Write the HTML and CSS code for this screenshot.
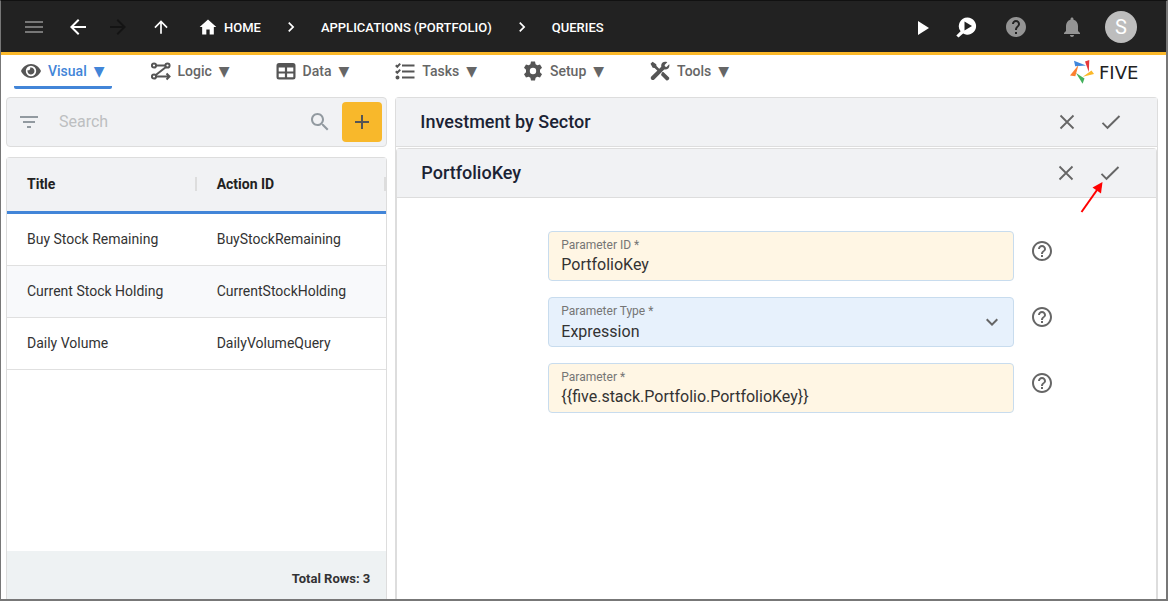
FILE: index.html
```
<!DOCTYPE html>
<html lang="en">
<head>
<meta charset="utf-8">
<meta name="viewport" content="width=device-width, initial-scale=1">
<title>Five - Queries</title>
<link rel="stylesheet" href="styles.css">
</head>
<body class="app">
<svg class="sprite" aria-hidden="true">
  <symbol id="chevron" viewBox="0 0 24 24"><path d="M10 6 8.59 7.41 13.17 12l-4.58 4.59L10 18l6-6z"/></symbol>
  <symbol id="help-outline" viewBox="0 0 24 24"><path d="M11 18h2v-2h-2v2zm1-16C6.48 2 2 6.48 2 12s4.480 10 10 10 10-4.480 10-10S17.520 2 12 2zm0 18c-4.410 0-8-3.590-8-8s3.590-8 8-8 8 3.590 8 8-3.590 8-8 8zm0-14c-2.210 0-4 1.790-4 4h2c0-1.100.9-2 2-2s2 .9 2 2c0 2-3 1.750-3 5h2c0-2.250 3-2.500 3-5 0-2.210-1.790-4-4-4z"/></symbol>
  <symbol id="close" viewBox="0 0 24 24"><path d="M5.500 5.500l13 13M18.500 5.500l-13 13" fill="none" stroke="currentColor" stroke-width="1.800"/></symbol>
  <symbol id="check" viewBox="0 0 24 24"><path d="M3.500 12.800l5 5L20.500 6" fill="none" stroke="currentColor" stroke-width="1.900"/></symbol>
</svg>

<header class="topbar">
  <div class="topbar-nav">
    <button class="icon-btn dim menu-btn" aria-label="Menu"><svg class="icon" viewBox="0 0 24 24"><path d="M3 6h18v2H3zM3 11h18v2H3zM3 16h18v2H3z"/></svg></button>
    <button class="icon-btn" aria-label="Back"><svg class="icon" viewBox="0 0 24 24"><path d="M20 11H7.830l5.590-5.590L12 4l-8 8 8 8 1.410-1.410L7.830 13H20z"/></svg></button>
    <button class="icon-btn off" aria-label="Forward" disabled><svg class="icon" viewBox="0 0 24 24"><path d="M4 11h12.170l-5.590-5.590L12 4l8 8-8 8-1.410-1.410L16.170 13H4z"/></svg></button>
    <button class="icon-btn up-btn" aria-label="Up"><svg class="icon small" viewBox="0 0 24 24"><path d="M4 12l1.410 1.410L11 7.830V20h2V7.830l5.580 5.590L20 12l-8-8z"/></svg></button>
  </div>
  <nav class="crumbs" aria-label="Breadcrumb">
    <a class="crumb" href="#"><svg class="icon small" viewBox="0 0 24 24"><path d="M10 21v-6h4v6h5v-9h3L12 3 2 12h3v9z"/></svg><span class="crumb-text">HOME</span></a>
    <svg class="icon small"><use href="#chevron"/></svg>
    <a class="crumb" href="#"><span class="crumb-text">APPLICATIONS (PORTFOLIO)</span></a>
    <svg class="icon small"><use href="#chevron"/></svg>
    <a class="crumb" href="#"><span class="crumb-text">QUERIES</span></a>
  </nav>
  <div class="topbar-tools">
    <button class="icon-btn" aria-label="Run"><svg class="icon" viewBox="0 0 24 24"><path d="M8 6v14l11-7z"/></svg></button>
    <button class="icon-btn" aria-label="Inspect"><svg class="icon" viewBox="0 0 24 24"><path fill-rule="evenodd" d="M13.500 2.500a8.600 8.600 0 1 1-4.400 16L4.500 22.500 2.300 20.600l4.300-4.300A8.600 8.600 0 0 1 13.500 2.500zM10.500 6.600v9l7.500-4.500z"/></svg></button>
    <button class="icon-btn grey help-btn" aria-label="Help"><svg class="icon" viewBox="0 0 24 24"><path d="M12 2C6.480 2 2 6.480 2 12s4.480 10 10 10 10-4.480 10-10S17.520 2 12 2zm1 17h-2v-2h2v2zm2.070-7.750l-.9.920C13.450 12.900 13 13.500 13 15h-2v-.5c0-1.100.45-2.100 1.170-2.830l1.240-1.260c.37-.36.590-.86.590-1.410 0-1.100-.9-2-2-2s-2 .9-2 2H8c0-2.210 1.790-4 4-4s4 1.790 4 4c0 .88-.36 1.680-.93 2.250z"/></svg></button>
    <button class="icon-btn grey bell-btn" aria-label="Notifications"><svg class="icon" viewBox="0 0 24 24"><path d="M12 22c1.100 0 2-.9 2-2h-4c0 1.100.89 2 2 2zm6-6v-5c0-3.070-1.640-5.640-4.500-6.320V4c0-.83-.67-1.500-1.500-1.500s-1.500.67-1.500 1.500v.68C7.630 5.360 6 7.920 6 11v5l-2 2v1h16v-1l-2-2z"/></svg></button>
    <button class="avatar" aria-label="Account">S</button>
  </div>
</header>

<div class="menubar">
  <nav class="tabs" aria-label="Main">
    <button class="tab active"><svg class="tab-icon" viewBox="0 0 20 20"><path fill-rule="evenodd" d="M10 3C5.500 3 1.800 6 0 10c1.800 4 5.500 7 10 7s8.200-3 10-7c-1.800-4-5.500-7-10-7zm0 1.800a5.200 5.200 0 1 1 0 10.400A5.200 5.200 0 0 1 10 4.800z"/><path d="M10 6.500a3.500 3.500 0 1 1-3.400 2.600 1.900 1.900 0 0 0 2.500-2.500z"/></svg><span>Visual</span><span class="tab-caret">▼</span></button>
    <button class="tab"><svg class="tab-icon line" viewBox="0 0 20 20"><circle cx="3" cy="4.500" r="2.100"/><circle cx="16.500" cy="4.500" r="2.100"/><circle cx="3" cy="15.500" r="2.100"/><path d="M5.200 4.500h9.100M15 6 4.800 14M5.200 15.500H18M15.500 12.500l3 3-3 3"/></svg><span>Logic</span><span class="tab-caret">▼</span></button>
    <button class="tab"><svg class="tab-icon" viewBox="0 0 20 20"><path fill-rule="evenodd" d="M3 2h14a2.500 2.500 0 0 1 2.500 2.500v11.500a2.500 2.500 0 0 1-2.500 2.500H3A2.500 2.500 0 0 1 .5 16V4.500A2.500 2.500 0 0 1 3 2zm-.3 4.500v4h6.200v-4zm8.400 0v4h6.200v-4zm-8.400 6v3.700h6.200v-3.700zm8.400 0v3.700h6.200v-3.700z"/></svg><span>Data</span><span class="tab-caret">▼</span></button>
    <button class="tab"><svg class="tab-icon line" viewBox="0 0 20 20"><path d="M7 4.500h12.500M7 10.500h12.500M7 16.500h12.500M.8 4.200l1.500 1.500L5.200 2.600M.8 10.200l1.500 1.500 2.900-3.100"/><circle cx="2.500" cy="16.500" r="1"/></svg><span>Tasks</span><span class="tab-caret">▼</span></button>
    <button class="tab"><svg class="tab-icon" viewBox="0 0 20 20"><path fill-rule="evenodd" d="M8 .5h4l.6 2.800 1.700 1L17 3.400l2 3.400-2 2v2.400l2 2-2 3.400-2.700-.9-1.700 1-.6 2.800H8l-.6-2.800-1.700-1-2.700.9-2-3.400 2-2V8.800l-2-2 2-3.400 2.700.9 1.700-1zm2 6.300a3.200 3.200 0 1 0 0 6.400 3.200 3.200 0 0 0 0-6.400z"/></svg><span>Setup</span><span class="tab-caret">▼</span></button>
    <button class="tab"><svg class="tab-icon" viewBox="0 0 20 20"><path d="M.5 2.800 2.600.8l3.600 2.400.3 1.900 3.600 3.600-1.900 1.900-3.600-3.600-1.900-.3zM12 11.200l1.400-.2 5.700 5.400c.8 1.700-1.300 3.700-2.900 2.800L11 14z"/><path d="M17.300 1.300 14.600 4l.4 1.500 1.500.4 2.700-2.700c1 3.500-1.800 6-5 5.300l-9.900 10c-2 1.800-4.800-.9-3-3l10-9.800c-.8-3.300 2.300-6 6-4.400z"/></svg><span>Tools</span><span class="tab-caret">▼</span></button>
  </nav>
  <div class="brand">
    <svg class="brand-mark" viewBox="0 0 24 24"><path fill="#3f86dc" d="M4 .8 16 5.500 5.200 6.200z"/><path fill="#e5383b" d="M15 1.500 19.300 0 18.800 12z"/><path fill="#fbb829" d="M12.800 16.800 21.500 10.500 24 14z"/><path fill="#43b05c" d="M6 13 14.500 18.500 12.600 23.800z"/><path fill="#fb8030" d="M8.500 5 5.300 16.200 0 15.500z"/></svg>
    <span class="brand-name">FIVE</span>
  </div>
</div>

<main class="workspace">
  <section class="list-pane">
    <form class="search">
      <button type="button" class="icon-btn filter-btn" aria-label="Filter"><svg class="icon" viewBox="0 0 24 24"><path d="M10 18h4v-2h-4v2zM3 6v2h18V6H3zm3 7h12v-2H6v2z"/></svg></button>
      <input class="search-input" type="text" placeholder="Search" aria-label="Search">
      <svg class="icon search-icon" viewBox="0 0 24 24"><path d="M15.500 14h-.79l-.28-.27C15.410 12.590 16 11.110 16 9.500 16 5.910 13.090 3 9.500 3S3 5.910 3 9.500 5.910 16 9.500 16c1.610 0 3.090-.59 4.230-1.570l.27.28v.79l5 4.990L20.490 19l-4.990-5zm-6 0C7.010 14 5 11.990 5 9.500S7.010 5 9.500 5 14 7.010 14 9.500 11.990 14 9.500 14z"/></svg>
      <button type="button" class="add-btn" aria-label="Add"><svg class="icon" viewBox="0 0 24 24"><path d="M19 13h-6v6h-2v-6H5v-2h6V5h2v6h6z"/></svg></button>
    </form>
    <div class="list-card">
      <table class="grid">
        <thead><tr><th scope="col"><span class="th-inner">Title</span></th><th scope="col"><span class="th-inner">Action ID</span></th></tr></thead>
        <tbody>
          <tr><td>Buy Stock Remaining</td><td>BuyStockRemaining</td></tr>
          <tr><td>Current Stock Holding</td><td>CurrentStockHolding</td></tr>
          <tr><td>Daily Volume</td><td>DailyVolumeQuery</td></tr>
        </tbody>
      </table>
      <div class="list-footer">Total Rows: 3</div>
    </div>
  </section>

  <section class="detail">
    <div class="panel-head">
      <h1 class="panel-title">Investment by Sector</h1>
      <button class="icon-btn" aria-label="Cancel"><svg class="icon"><use href="#close"/></svg></button>
      <button class="icon-btn" aria-label="Save"><svg class="icon"><use href="#check"/></svg></button>
    </div>
    <div class="subpanel">
      <div class="panel-head">
        <h2 class="panel-title">PortfolioKey</h2>
        <button class="icon-btn" aria-label="Cancel parameter"><svg class="icon"><use href="#close"/></svg></button>
        <button class="icon-btn save-param" aria-label="Save parameter"><svg class="icon"><use href="#check"/></svg><svg class="pointer" viewBox="0 0 24 32"><path d="M1.500 31 17 9" stroke="#f00" stroke-width="2"/><path fill="#f00" d="M22.500 1 21 12.500 12.500 6.500z"/></svg></button>
      </div>
      <form class="fields">
        <div class="row">
          <div class="field"><label for="pid">Parameter ID *</label><input id="pid" type="text" value="PortfolioKey"></div>
          <button type="button" class="icon-btn" aria-label="Help on Parameter ID"><svg class="icon"><use href="#help-outline"/></svg></button>
        </div>
        <div class="row">
          <div class="field choice"><label for="ptype">Parameter Type *</label><select id="ptype"><option>Expression</option></select><svg class="icon caret"><use href="#chevron"/></svg></div>
          <button type="button" class="icon-btn" aria-label="Help on Parameter Type"><svg class="icon"><use href="#help-outline"/></svg></button>
        </div>
        <div class="row">
          <div class="field"><label for="pval">Parameter *</label><input id="pval" type="text" value="{{five.stack.Portfolio.PortfolioKey}}"></div>
          <button type="button" class="icon-btn" aria-label="Help on Parameter"><svg class="icon"><use href="#help-outline"/></svg></button>
        </div>
      </form>
    </div>
  </section>
</main>
</body>
</html>
```
FILE: styles.css
```
* { box-sizing: border-box; }

.app {
  margin: 0;
  min-height: 100vh;
  display: flex;
  flex-direction: column;
  border: solid #777;
  border-width: 1px 2px 2px 1px;
  border-top-color: #111;
  background: #fff;
  color: #333;
  font-family: Roboto, "Liberation Sans", sans-serif;
  font-size: 14px;
}

button, input, select { font: inherit; color: inherit; margin: 0; }
button { padding: 0; border: 0; background: none; }

.sprite { display: none; }
.icon { display: block; width: 24px; height: 24px; flex: none; fill: currentColor; }
.icon.small { width: 20px; height: 20px; }
.icon-btn {
  flex: none;
  width: 40px;
  height: 40px;
  display: flex;
  align-items: center;
  justify-content: center;
}

/* Top bar */
.topbar {
  display: flex;
  align-items: center;
  height: 54px;
  padding: 0 29px 0 13px;
  background: #222;
  border-bottom: 3px solid #fbb829;
  color: #fff;
}
.topbar-nav, .topbar-tools, .crumbs, .crumb { display: flex; align-items: center; }
.menu-btn { margin-right: 4px; }
.up-btn { margin-left: 3px; }
.dim { color: #777; }
.off { color: #141414; }
.grey { color: #949494; }
.crumbs { flex: 1; gap: 20px; margin-left: 17px; }
.crumb { gap: 6px; color: #fff; font-size: 13px; font-weight: 500; text-decoration: none; }
.crumb-text { padding-top: 2px; }
.help-btn { margin: 0 16px 0 10px; }
.topbar-tools .icon-btn + .icon-btn:nth-child(2) { margin-left: 4px; }
.avatar {
  width: 32px;
  height: 32px;
  margin-left: 13px;
  border-radius: 50%;
  background: #bdbdbd;
  color: #fff;
  font-size: 20px;
}

/* Menu tabs */
.menubar {
  display: flex;
  justify-content: space-between;
  height: 42px;
  padding: 0 9px 0 13px;
}
.tabs { display: flex; align-items: flex-start; gap: 32px; }
.tab {
  display: flex;
  align-items: center;
  gap: 7px;
  height: 34px;
  padding: 0 7px;
  border-bottom: 3px solid transparent;
  color: #666;
  font-weight: 500;
  white-space: nowrap;
}
.tab.active { color: #4285d8; border-bottom-color: #4285d8; border-radius: 2px; }
.tab-icon { width: 20px; height: 20px; flex: none; fill: #555; }
.tab-icon.line { fill: none; stroke: #555; stroke-width: 2; }
.tab-caret { font-family: "DejaVu Sans", sans-serif; font-size: 14px; font-weight: 400; line-height: 16px; }
.brand { display: flex; align-items: center; gap: 5px; height: 34px; }
.brand-mark { width: 24px; height: 24px; }
.brand-name { width: 58px; font-family: "DejaVu Sans", sans-serif; font-size: 18px; color: #222; }

/* Workspace */
.workspace {
  flex: 1;
  display: grid;
  grid-template-columns: 1fr 2fr;
  gap: 8px;
  padding: 0 8px 0 5px;
}
.list-pane { display: flex; flex-direction: column; gap: 10px; min-width: 0; }

.search {
  display: flex;
  align-items: center;
  height: 50px;
  padding: 0 4px 0 2px;
  border: 1px solid #ddd;
  border-radius: 4px;
  background: #f1f2f4;
}
.filter-btn, .search-icon { color: #929aa0; }
.search-input {
  flex: 1;
  min-width: 0;
  padding: 0 0 2px 10px;
  border: 0;
  outline: 0;
  background: none;
  font-size: 16px;
}
.search-input::placeholder { color: #bdbfc1; opacity: 1; }
.search-icon { margin-right: 10px; }
.add-btn {
  display: grid;
  place-items: center;
  width: 40px;
  height: 40px;
  border-radius: 4px;
  background: #f8b82b;
  color: #555;
}

.list-card {
  flex: 1;
  display: flex;
  flex-direction: column;
  border: 1px solid #ddd;
  border-bottom: 0;
  border-radius: 4px 4px 0 0;
}
.grid { width: 100%; table-layout: fixed; border-collapse: separate; border-spacing: 0; }
.grid th {
  height: 56px;
  padding: 0 0 1px;
  border-bottom: 3px solid #4285d8;
  background: #f1f2f4;
  color: #222;
  font-weight: 700;
  text-align: left;
}
.th-inner { display: block; padding-left: 20px; border-right: 2px solid #ddd; line-height: 14px; }
.grid td { height: 52px; padding: 0 0 2px 20px; border-bottom: 1px solid #e0e0e0; }
.grid tbody tr:nth-child(even) td { background: #f8f9fb; }
.list-footer {
  margin-top: auto;
  height: 48px;
  padding: 4px 16px 0;
  background: #eef2f3;
  font-size: 13px;
  font-weight: 700;
  line-height: 48px;
  text-align: right;
}

/* Detail */
.detail {
  display: flex;
  flex-direction: column;
  border: 1px solid #ddd;
  border-bottom: 0;
  border-radius: 4px 4px 0 0;
}
.panel-head {
  display: flex;
  align-items: center;
  gap: 4px;
  height: 49px;
  padding: 0 26px 0 24px;
  border-bottom: 1px solid #ddd;
  background: #f1f2f4;
  color: #666;
}
.panel-title { flex: 1; margin: 0; padding-bottom: 2px; color: #1b2334; font-size: 18px; font-weight: 500; }
.subpanel {
  flex: 1;
  margin-top: 1px;
  border: 1px solid #ddd;
  border-bottom: 0;
  border-radius: 4px 4px 0 0;
}
.save-param { position: relative; }
.pointer { position: absolute; left: -10px; top: 28px; width: 24px; height: 32px; }

.fields { display: grid; gap: 16px; padding: 33px 94px 0 151px; color: #666; }
.row { display: flex; gap: 8px; }
.field {
  position: relative;
  flex: 1;
  height: 50px;
  padding: 5px 12px 0;
  border: 1px solid #c8dcee;
  border-radius: 4px;
  background: #fff6e4;
}
.field label { display: block; color: #757575; font-size: 12px; line-height: 16px; }
.field input, .field select {
  display: block;
  width: 100%;
  height: 24px;
  padding: 0;
  border: 0;
  outline: 0;
  appearance: none;
  background: none;
  color: #333;
  font-size: 16px;
  line-height: 24px;
}
.field select { height: 26px; }
.field.choice { background: #e7f1fc; }
.caret { position: absolute; right: 9px; top: 12px; transform: rotate(90deg); }
```
